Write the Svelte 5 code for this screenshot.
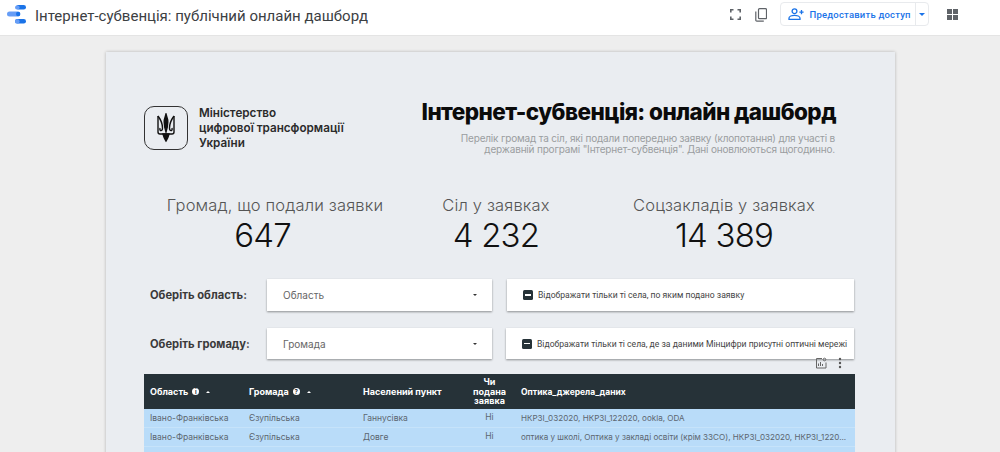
<script>
  const stats = [
    { label: 'Громад, що подали заявки', value: '647', cls: 'a' },
    { label: 'Сіл у заявках', value: '4 232', cls: 'b' },
    { label: 'Соцзакладів у заявках', value: '14 389', cls: 'c' }
  ];
  const filters = [
    { label: 'Оберіть область:', select: 'Область', check: 'Відображати тільки ті села, по яким подано заявку', cls: 'one' },
    { label: 'Оберіть громаду:', select: 'Громада', check: 'Відображати тільки ті села, де за даними Мінцифри присутні оптичні мережі', cls: 'two' }
  ];
  const rows = [
    ['Івано-Франківська', 'Єзупільська', 'Ганнусівка', 'Ні', 'НКРЗІ_032020, НКРЗІ_122020, ookla, ODA'],
    ['Івано-Франківська', 'Єзупільська', 'Довге', 'Ні', 'оптика у школі, Оптика у закладі освіти (крім ЗЗСО), НКРЗІ_032020, НКРЗІ_1220...'],
    ['', '', '', '', '']
  ];
</script>

<div class="screen">
  <header class="topbar">
    <svg class="logo" width="20" height="20" viewBox="0 0 20 20">
      <rect x="9" y="0" width="10" height="4.6" rx="2.3" fill="#1a73e8" />
      <rect x="8" y="0.4" width="4.6" height="4.2" rx="2.1" fill="#669df6" />
      <rect x="0" y="6.5" width="13" height="5" rx="2.5" fill="#669df6" />
      <rect x="9" y="6.8" width="4.4" height="4.4" rx="2.2" fill="#1a73e8" />
      <rect x="8" y="14" width="11" height="4.6" rx="2.3" fill="#1a73e8" />
      <rect x="8" y="14.2" width="4.6" height="4.4" rx="2.2" fill="#669df6" />
    </svg>
    <h1>Інтернет-субвенція: публічний онлайн дашборд</h1>
    <div class="spacer"></div>
    <svg class="ic full" width="11" height="11" viewBox="0 0 11 11" fill="none" stroke="#5f6368" stroke-width="1.6">
      <path d="M.8 3.500V.8h2.700M7.500.8h2.700v2.700M10.200 7.500v2.700H7.500M3.500 10.200H.8V7.500" />
    </svg>
    <svg class="ic copy" width="12" height="14" viewBox="0 0 12 14" fill="none" stroke="#5f6368" stroke-width="1.2">
      <rect x="3.500" y="0.700" width="8" height="10" rx="1" />
      <path d="M0.800 3.500v8.700a1 1 0 0 0 1 1h7" />
    </svg>
    <div class="share">
      <div class="share-main">
        <svg width="16" height="12" viewBox="0 0 16 12" fill="none" stroke="#1a73e8" stroke-width="1.3">
          <circle cx="6.5" cy="3.2" r="2.4" />
          <path d="M1 11.3V10c0-1.700 3-2.700 5.500-2.700S12 8.300 12 10v1.300z" />
          <path d="M13.500 2v4.200M11.400 4.100h4.200" />
        </svg>
        <span>Предоставить доступ</span>
      </div>
      <div class="share-arrow"><span class="tri"></span></div>
    </div>
    <div class="apps">
      <i></i><i></i><i></i><i></i>
    </div>
  </header>

  <main class="stage">
    <section class="page">
      <div class="head">
        <div class="brand">
          <div class="emblem">
            <svg width="20" height="30" viewBox="0 0 20 30" fill="none" stroke="#111" stroke-width="1.400">
              <path d="M2 3v16q0 2 2 2h12q2 0 2-2V3" />
              <path d="M2 3q4.500 6 4.500 12 0 3-2 2.500-1-.500-.5-2.500" />
              <path d="M18 3q-4.500 6-4.500 12 0 3 2 2.500 1-.500.500-2.500" />
              <path d="M10 1 8.300 7q-.500 5 1.700 12 2.200-7 1.700-12z" fill="#111" />
              <path d="M7 21q1 4 3 7 2-3 3-7z" fill="#111" />
            </svg>
          </div>
          <div class="ministry">
            <div>Міністерство</div>
            <div>цифрової трансформації</div>
            <div>України</div>
          </div>
        </div>
        <div class="intro">
          <h2>Інтернет-субвенція: онлайн дашборд</h2>
          <p>Перелік громад та сіл, які подали попередню заявку (клопотання) для участі в<br />державній програмі "Інтернет-субвенція". Дані оновлюються щогодинно.</p>
        </div>
      </div>

      <div class="stats">
        {#each stats as s}
          <div class="stat {s.cls}">
            <div class="stat-label">{s.label}</div>
            <div class="stat-value">{s.value}</div>
          </div>
        {/each}
      </div>

      <div class="filters">
        {#each filters as f}
          <div class="filter {f.cls}">
            <div class="filter-label">{f.label}</div>
            <div class="select">
              <span>{f.select}</span>
              <span class="tri small"></span>
            </div>
            <div class="check">
              <span class="box"><b></b></span>
              <span>{f.check}</span>
            </div>
          </div>
        {/each}
      </div>

      <div class="tools">
        <svg width="12" height="12" viewBox="0 0 12 12" fill="none" stroke="#666" stroke-width="1">
          <path d="M7 1.500H1.500v9.500h9.500V5.500" />
          <path d="M3.500 9V6.500M5.500 9V5M7.500 9V7" />
          <circle cx="9.500" cy="2.500" r="1.300" />
        </svg>
        <svg width="4" height="12" viewBox="0 0 4 12" fill="#555">
          <circle cx="2" cy="2" r="1.200" /><circle cx="2" cy="6" r="1.200" /><circle cx="2" cy="10" r="1.200" />
        </svg>
      </div>

      <div class="table">
        <div class="tr th">
          <div class="cell sort">Область <span class="info">i</span> <span class="up"></span></div>
          <div class="cell sort">Громада <span class="info">?</span> <span class="up"></span></div>
          <div class="cell">Населений пункт</div>
          <div class="cell mid">Чи<br />подана<br />заявка</div>
          <div class="cell opt-h">Оптика_джерела_даних</div>
        </div>
        {#each rows as r}
          <div class="tr td">
            <div class="cell">{r[0]}</div>
            <div class="cell">{r[1]}</div>
            <div class="cell">{r[2]}</div>
            <div class="cell mid">{r[3]}</div>
            <div class="cell opt">{r[4]}</div>
          </div>
        {/each}
      </div>
    </section>
  </main>
</div>

<style>
  :global(body) { margin: 0; overflow: hidden; }

  .screen {
    width: 1000px;
    height: 452px;
    overflow: hidden;
    background: #eeeeee;
    display: flex;
    flex-direction: column;
    font-family: Inter, "Liberation Sans", sans-serif;
  }

  .topbar {
    height: 35px;
    flex-shrink: 0;
    background: #fff;
    border-bottom: 1px solid #e4e4e4;
    display: flex;
    align-items: center;
    padding-left: 7px;
    box-sizing: content-box;
  }
  .logo { margin-top: -6px; flex-shrink: 0; }
  h1 {
    margin: 0 0 0 8px;
    font: 400 15px Roboto, sans-serif;
    letter-spacing: 0;
    color: #3c4043;
    position: relative;
    top: -2px;
  }
  .spacer { flex: 1; }
  .ic { flex-shrink: 0; }
  .full { margin-right: 14px; margin-top: -6px; }
  .copy { margin-right: 13px; margin-top: -6px; }
  .share {
    display: flex;
    width: 149px;
    height: 24px;
    flex-shrink: 0;
    margin-top: -7px;
    border: 1px solid #e8eaed;
    border-radius: 4px;
    box-sizing: border-box;
    font: 500 9.500px Roboto, sans-serif;
    color: #1a73e8;
    letter-spacing: 0.2px;
    white-space: nowrap;
  }
  .share-main {
    flex: 1;
    display: flex;
    align-items: center;
    gap: 6px;
    padding-left: 7px;
    border-right: 1px solid #e8eaed;
  }
  .share-arrow { width: 12px; display: flex; align-items: center; justify-content: center; }
  .tri {
    width: 0;
    height: 0;
    border-left: 3.500px solid transparent;
    border-right: 3.500px solid transparent;
    border-top: 3.500px solid #1a73e8;
  }
  .apps {
    display: grid;
    grid-template-columns: 5px 5px;
    gap: 1.500px;
    margin: -6px 42px 0 18px;
  }
  .apps i { width: 5px; height: 5px; background: #5f6368; display: block; }

  .stage { flex: 1; padding: 16px 0 0 106px; min-height: 0; }
  .page {
    width: 789px;
    height: 500px;
    background: #eaedf1;
    box-shadow: 0 0 3px rgba(0, 0, 0, 0.25);
    padding: 54px 40px 0 38px;
    box-sizing: border-box;
  }

  .head { display: flex; justify-content: space-between; height: 62px; }
  .brand { display: flex; gap: 11px; }
  .emblem {
    width: 44px;
    height: 44px;
    box-sizing: border-box;
    border: 1px solid #333;
    border-radius: 10px;
    display: flex;
    align-items: center;
    justify-content: center;
  }
  .ministry {
    font-size: 11.700px;
    font-weight: 600;
    line-height: 15px;
    color: #2b2b2b;
  }
  .intro { text-align: right; margin-top: -9px; margin-right: 19px; }
  h2 {
    margin: 0;
    font-size: 22.500px;
    font-weight: 800;
    line-height: 30px;
    color: #0b0b0b;
    letter-spacing: -0.560px;
    white-space: nowrap;
  }
  .intro p {
    margin: 6px 1px 0 0;
    font-size: 10px;
    line-height: 11px;
    color: #9a9da0;
    letter-spacing: -0.180px;
    white-space: nowrap;
  }

  .stats { display: grid; grid-template-columns: 262px 180px 276px; margin-top: 27px; text-align: center; }
  .stat-label { font-size: 16.500px; font-weight: 300; color: #555; line-height: 20px; letter-spacing: 0.15px; white-space: nowrap; }
  .stat-value { font-size: 33px; font-weight: 300; color: #111; line-height: 38px; margin-top: 1px; letter-spacing: -0.800px; }
  .stat.a .stat-value { padding-right: 25px; }

  .filters { display: flex; flex-direction: column; margin-top: 25px; }
  .filter { display: grid; grid-template-columns: 108px 225px 347px; column-gap: 15px; align-items: stretch; }
  .filter.one { height: 32px; margin-bottom: 17px; }
  .filter.two { height: 31px; }
  .filter.two .check { margin-left: -1px; }
  .filter-label {
    padding-left: 6px;
    font-size: 11.200px;
    font-weight: 700;
    color: #3a3a3a;
    align-self: center;
    white-space: nowrap;
  }
  .select {
    background: #fff;
    box-shadow: 0 1px 2px rgba(0, 0, 0, 0.4);
    display: flex;
    align-items: center;
    justify-content: space-between;
    padding: 0 15px 0 16px;
    font-size: 10px;
    color: #666;
  }
  .tri.small { border-left-width: 2.500px; border-right-width: 2.500px; border-top: 2.500px solid #333; }
  .check {
    background: #fff;
    box-shadow: 0 1px 2px rgba(0, 0, 0, 0.4);
    display: flex;
    align-items: center;
    gap: 5px;
    padding-left: 16px;
    font: 400 8.600px Roboto, sans-serif;
    color: #444;
    white-space: nowrap;
  }
  .box {
    width: 10px;
    height: 10px;
    border-radius: 1.500px;
    background: #263238;
    display: flex;
    align-items: center;
    justify-content: center;
    flex-shrink: 0;
  }
  .box b { width: 6px; height: 1.500px; background: #fff; display: block; }

  .tools {
    display: flex;
    justify-content: flex-end;
    align-items: flex-start;
    height: 17px;
    margin-top: -2px;
    gap: 11px;
    padding-right: 13px;
    position: relative;
  }

  .table { width: 711px; font-size: 8.500px; }
  .tr { display: grid; grid-template-columns: 99px 114px 109px 47px 1fr; align-items: center; }
  .th {
    height: 35px;
    background: #263238;
    color: #fff;
    font-weight: 700;
    font-size: 9px;
  }
  .td {
    height: 18px;
    background: #b9dcf9;
    border-bottom: 1px solid #c6e3fa;
    box-sizing: content-box;
    color: #5c6670;
  }
  .cell { padding-left: 6px; white-space: nowrap; }
  .mid { text-align: center; padding-left: 0; line-height: 9.500px; }
  .opt { padding-left: 8px; font-size: 8.100px; }
  .opt-h { padding-left: 8px; font-size: 8.500px; }
  .sort { display: flex; align-items: center; gap: 3px; }
  .info {
    width: 7px;
    height: 7px;
    border-radius: 50%;
    background: #fff;
    color: #263238;
    font-size: 6px;
    line-height: 7px;
    text-align: center;
    margin-left: 1px;
  }
  .up {
    width: 0;
    height: 0;
    margin-left: 4px;
    border-left: 2.500px solid transparent;
    border-right: 2.500px solid transparent;
    border-bottom: 2.500px solid #fff;
  }
</style>
